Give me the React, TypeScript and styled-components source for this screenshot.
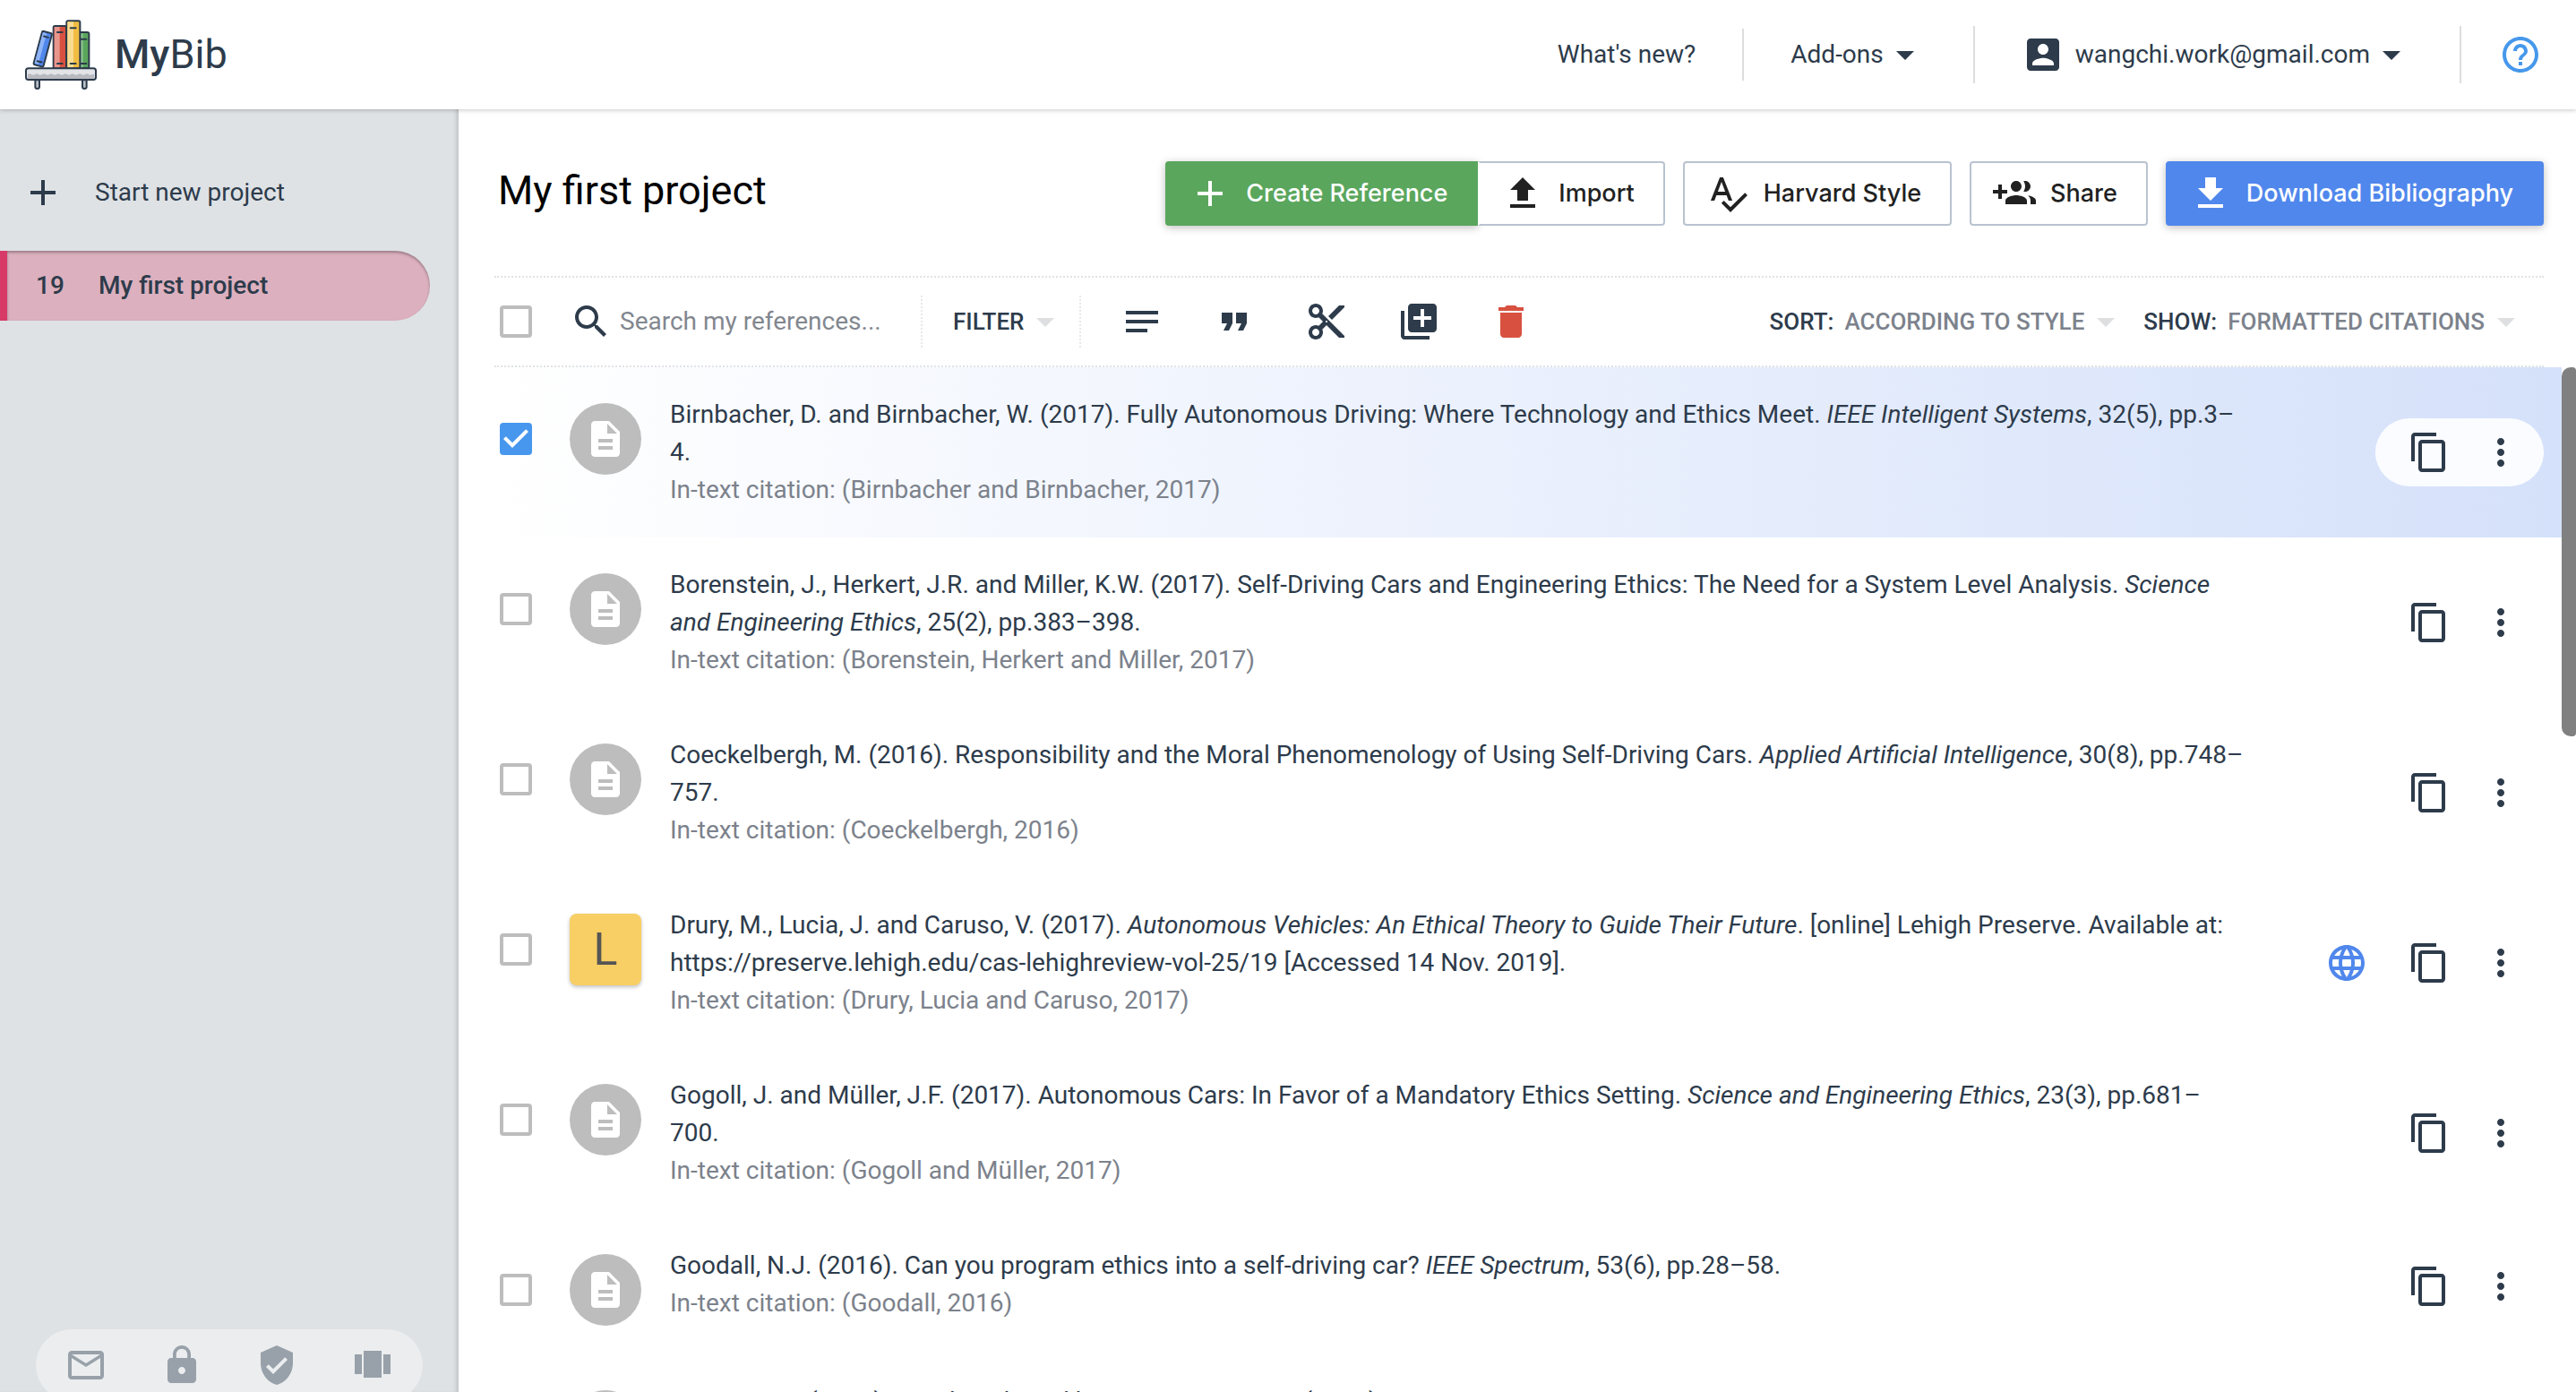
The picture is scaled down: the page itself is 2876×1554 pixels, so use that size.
import React from "react";
import styled, { createGlobalStyle } from "styled-components";

const ink = "#2d3b4b";
const muted = "#7c828c";
const green = "#5aa65d";
const blue = "#5087ec";
const danger = "#d85140";

const GlobalStyle = createGlobalStyle`
  *, *::before, *::after { box-sizing: border-box; }
  body {
    margin: 0;
    overflow: hidden;
    background: #fff;
    color: ${ink};
    font-family: Roboto, "Liberation Sans", sans-serif;
    font-size: 28px;
    line-height: 42px;
  }
  button, input, select { font: inherit; color: inherit; margin: 0; }
  button { background: none; border: 0; padding: 0; cursor: pointer; }
  h1 { margin: 0; }
`;

const paths = {
  add: "M19 13h-6v6h-2v-6H5v-2h6V5h2v6h6v2z",
  upload: "M9 16h6v-6h4l-7-7-7 7h4zm-4 2h14v2H5z",
  download: "M19 9h-4V3H9v6H5l7 7 7-7zM5 18v2h14v-2H5z",
  spellcheck:
    "M12.45 16h2.09L9.43 3H7.57L2.46 16h2.09l1.12-3h5.64l1.14 3zm-6.02-5L8.5 5.48 10.57 11H6.43zm15.16.59l-8.09 8.09L9.83 16l-1.41 1.41 5.09 5.09L23 13l-1.41-1.41z",
  groupAdd:
    "M8 10H5V7H3v3H0v2h3v3h2v-3h3v-2zm10 1c1.66 0 2.99-1.34 2.99-3S19.66 5 18 5c-.32 0-.63.05-.91.14.57.81.9 1.79.9 2.86s-.34 2.04-.9 2.86c.28.09.59.14.91.14zm-5 0c1.66 0 2.99-1.34 2.99-3S14.66 5 13 5c-1.66 0-3 1.34-3 3s1.34 3 3 3zm6.62 2.16c.83.73 1.38 1.66 1.38 2.84v2h3v-2c0-1.54-2.37-2.49-4.38-2.84zM13 13c-2 0-6 1-6 3v2h12v-2c0-2-4-3-6-3z",
  search:
    "M15.5 14h-.79l-.28-.27C15.41 12.59 16 11.11 16 9.5 16 5.91 13.09 3 9.5 3S3 5.91 3 9.5 5.91 16 9.5 16c1.61 0 3.09-.59 4.23-1.57l.27.28v.79l5 4.99L20.49 19l-4.99-5zm-6 0C7.01 14 5 11.99 5 9.5S7.01 5 9.5 5 14 7.01 14 9.5 11.99 14 9.5 14z",
  notes: "M3 18h12v-2H3v2zM3 6v2h18V6H3zm0 7h18v-2H3v2z",
  quote: "M6 17h3l2-4V7H5v6h3zm8 0h3l2-4V7h-6v6h3z",
  cut: "M9.64 7.64c.23-.5.36-1.05.36-1.64 0-2.21-1.79-4-4-4S2 3.79 2 6s1.79 4 4 4c.59 0 1.14-.13 1.64-.36L10 12l-2.36 2.36C7.14 14.13 6.59 14 6 14c-2.21 0-4 1.79-4 4s1.79 4 4 4 4-1.79 4-4c0-.59-.13-1.14-.36-1.64L12 14l7 7h3v-1L9.64 7.64zM6 8c-1.1 0-2-.89-2-2s.9-2 2-2 2 .89 2 2-.9 2-2 2zm0 12c-1.1 0-2-.89-2-2s.9-2 2-2 2 .89 2 2-.9 2-2 2zm6-7.5c-.28 0-.5-.22-.5-.5s.22-.5.5-.5.5.22.5.5-.22.5-.5.5zM19 3l-6 6 2 2 7-7V3z",
  libraryAdd:
    "M4 6H2v14c0 1.1.9 2 2 2h14v-2H4V6zm16-4H8c-1.1 0-2 .9-2 2v12c0 1.1.9 2 2 2h12c1.1 0 2-.9 2-2V4c0-1.1-.9-2-2-2zm-1 9h-4v4h-2v-4H9V9h4V5h2v4h4v2z",
  trash: "M6 19c0 1.1.9 2 2 2h8c1.1 0 2-.9 2-2V7H6v12zM19 4h-3.5l-1-1h-5l-1 1H5v2h14V4z",
  copy: "M16 1H4c-1.1 0-2 .9-2 2v14h2V3h12V1zm3 4H8c-1.1 0-2 .9-2 2v14c0 1.1.9 2 2 2h11c1.1 0 2-.9 2-2V7c0-1.1-.9-2-2-2zm0 16H8V7h11v14z",
  more: "M12 8c1.1 0 2-.9 2-2s-.9-2-2-2-2 .9-2 2 .9 2 2 2zm0 2c-1.1 0-2 .9-2 2s.9 2 2 2 2-.9 2-2-.9-2-2-2zm0 6c-1.1 0-2 .9-2 2s.9 2 2 2 2-.9 2-2-.9-2-2-2z",
  globe:
    "M11.99 2C6.47 2 2 6.48 2 12s4.47 10 9.99 10C17.52 22 22 17.52 22 12S17.52 2 11.99 2zm6.93 6h-2.95c-.32-1.25-.78-2.45-1.38-3.56 1.84.63 3.37 1.91 4.33 3.56zM12 4.04c.83 1.2 1.48 2.53 1.91 3.96h-3.82c.43-1.43 1.08-2.76 1.91-3.96zM4.26 14C4.1 13.36 4 12.69 4 12s.1-1.36.26-2h3.38c-.08.66-.14 1.32-.14 2 0 .68.06 1.34.14 2H4.26zm.82 2h2.95c.32 1.25.78 2.45 1.38 3.56-1.84-.63-3.37-1.9-4.33-3.56zm2.95-8H5.08c.96-1.66 2.49-2.93 4.33-3.56C8.81 5.55 8.35 6.75 8.03 8zM12 19.96c-.83-1.2-1.48-2.53-1.91-3.96h3.82c-.43 1.43-1.08 2.76-1.91 3.96zM14.34 14H9.66c-.09-.66-.16-1.32-.16-2 0-.68.07-1.35.16-2h4.68c.09.65.16 1.32.16 2 0 .68-.07 1.34-.16 2zm.25 5.56c.6-1.11 1.06-2.31 1.38-3.56h2.95c-.96 1.65-2.49 2.93-4.33 3.56zM16.36 14c.08-.66.14-1.32.14-2 0-.68-.06-1.34-.14-2h3.38c.16.64.26 1.31.26 2s-.1 1.36-.26 2h-3.38z",
  description:
    "M14 2H6c-1.1 0-1.99.9-1.99 2L4 20c0 1.1.89 2 1.99 2H18c1.1 0 2-.9 2-2V8l-6-6zm2 16H8v-2h8v2zm0-4H8v-2h8v2zm-3-5V3.5L18.5 9H13z",
  account:
    "M3 5v14c0 1.1.89 2 2 2h14c1.1 0 2-.9 2-2V5c0-1.1-.9-2-2-2H5c-1.11 0-2 .9-2 2zm12 4c0 1.66-1.34 3-3 3s-3-1.34-3-3 1.34-3 3-3 3 1.34 3 3zm-9 8c0-2 4-3.1 6-3.1s6 1.1 6 3.1v1H6v-1z",
  help: "M11 18h2v-2h-2v2zm1-16C6.48 2 2 6.48 2 12s4.48 10 10 10 10-4.48 10-10S17.52 2 12 2zm0 18c-4.41 0-8-3.59-8-8s3.59-8 8-8 8 3.59 8 8-3.59 8-8 8zm0-14c-2.21 0-4 1.79-4 4h2c0-1.1.9-2 2-2s2 .9 2 2c0 2-3 1.75-3 5h2c0-2.25 3-2.5 3-5 0-2.21-1.79-4-4-4z",
  mail: "M20 4H4c-1.1 0-1.99.9-1.99 2L2 18c0 1.1.9 2 2 2h16c1.1 0 2-.9 2-2V6c0-1.1-.9-2-2-2zm0 14H4V8l8 5 8-5v10zm-8-7L4 6h16l-8 5z",
  lock: "M18 8h-1V6c0-2.76-2.24-5-5-5S7 3.24 7 6v2H6c-1.1 0-2 .9-2 2v10c0 1.1.9 2 2 2h12c1.1 0 2-.9 2-2V10c0-1.1-.9-2-2-2zm-6 9c-1.1 0-2-.9-2-2s.9-2 2-2 2 .9 2 2-.9 2-2 2zm3.1-9H8.9V6c0-1.71 1.39-3.1 3.1-3.1 1.71 0 3.1 1.39 3.1 3.1v2z",
  shield:
    "M12 1L3 5v6c0 5.55 3.84 10.74 9 12 5.16-1.26 9-6.45 9-12V5l-9-4zm-2 16l-4-4 1.41-1.41L10 14.17l6.59-6.59L18 9l-8 8z",
  carousel: "M7 19h10V4H7v15zm-5-2h4V6H2v11zM18 6v11h4V6h-4z",
  caret: "M7 10l5 5 5-5z",
  check: "M10 17l-5-5 1.41-1.41L10 14.17l7.59-7.59L19 8z",
};

type IconName = keyof typeof paths;

const Svg = styled.svg<{ $color?: string }>`
  display: block;
  flex: none;
  width: 48px;
  height: 48px;
  fill: ${(p) => p.$color ?? "currentColor"};
`;

function Icon({ name, color }: { name: IconName; color?: string }) {
  return (
    <Svg viewBox="0 0 24 24" $color={color} aria-hidden="true">
      <path d={paths[name]} />
    </Svg>
  );
}

/* ---------- shell ---------- */

const Page = styled.div`
  display: flex;
  flex-direction: column;
  height: 100vh;
`;

const Header = styled.header`
  display: flex;
  align-items: center;
  flex: none;
  height: 122px;
  padding: 0 38px 0 28px;
  background: #fff;
  box-shadow: 0 1px 5px rgba(0, 0, 0, 0.22);
  z-index: 2;
`;

const Brand = styled.a`
  display: flex;
  align-items: center;
  gap: 20px;
  color: ${ink};
  text-decoration: none;
  font-size: 45px;
  line-height: 66px;
`;

const BrandStrong = styled.span`
  font-weight: 500;
`;

const LogoSvg = styled.svg`
  display: block;
  width: 80px;
  height: 78px;
`;

const Nav = styled.nav`
  display: flex;
  align-items: center;
  margin-left: auto;
`;

const NavLink = styled.a`
  color: inherit;
  text-decoration: none;
`;

const MenuButton = styled.button<{ $strong?: boolean }>`
  display: flex;
  align-items: center;
  white-space: nowrap;
  font-size: ${(p) => (p.$strong ? "26px" : "28px")};
  font-weight: ${(p) => (p.$strong ? 500 : 400)};
`;

const AccountName = styled.span`
  margin-left: 12px;
`;

const NavDivider = styled.span<{ $height: number }>`
  width: 2px;
  height: ${(p) => p.$height}px;
  margin: 0 52px;
  background: #dcdddf;
`;

const HelpLink = styled.a`
  margin-left: -10px;
  color: #4698eb;
`;

const Body = styled.div`
  display: flex;
  flex: 1;
  min-height: 0;
`;

/* ---------- sidebar ---------- */

const Sidebar = styled.aside`
  display: flex;
  flex-direction: column;
  flex: none;
  width: 512px;
  padding-top: 50px;
  background: #dee2e5;
  box-shadow: inset -5px 0 5px -3px rgba(0, 0, 0, 0.16);
`;

const NewProject = styled.button`
  display: flex;
  align-items: center;
  gap: 34px;
  height: 86px;
  margin-bottom: 22px;
  padding: 0 24px;
`;

const ProjectItem = styled.button`
  display: flex;
  align-items: center;
  width: 480px;
  height: 78px;
  padding-left: 32px;
  border-left: 8px solid #d73a67;
  border-radius: 0 40px 40px 0;
  background: #dcb0be;
  box-shadow: inset 0 2px 3px rgba(0, 0, 0, 0.3);
  font-weight: 500;
`;

const ProjectCount = styled.span`
  width: 70px;
  text-align: left;
`;

const SideLinks = styled.div`
  display: flex;
  justify-content: space-between;
  margin: auto 40px -10px;
  padding: 16px 32px;
  border-radius: 40px;
  background: #ebedef;
  color: #98a1a9;
`;

const SideLink = styled.a`
  color: inherit;
`;

/* ---------- main ---------- */

const Main = styled.main`
  display: flex;
  flex-direction: column;
  flex: 1;
  min-width: 0;
`;

const TitleBar = styled.div`
  display: flex;
  align-items: flex-start;
  flex: none;
  padding: 58px 36px 56px 44px;
`;

const Title = styled.h1`
  color: #000;
  font-size: 45px;
  font-weight: 400;
  line-height: 66px;
`;

const Actions = styled.div`
  display: flex;
  gap: 20px;
  margin-left: auto;
`;

const ButtonGroup = styled.div`
  display: flex;
`;

type ActionTone = "green" | "blue" | "plain";

const fills: Record<ActionTone, string> = { green, blue, plain: "#fff" };
const borders: Record<ActionTone, string> = { green, blue, plain: "#b9c3d0" };

const ActionButton = styled.button<{ $tone: ActionTone; $join?: "left" | "right" }>`
  display: flex;
  align-items: center;
  gap: 16px;
  height: 72px;
  padding: 0 32px 0 24px;
  border: 2px solid ${(p) => borders[p.$tone]};
  ${(p) => p.$join === "right" && "border-left-color: #fff;"}
  border-radius: ${(p) =>
    p.$join === "left" ? "4px 0 0 4px" : p.$join === "right" ? "0 4px 4px 0" : "4px"};
  background: ${(p) => fills[p.$tone]};
  color: ${(p) => (p.$tone === "plain" ? "#212121" : "#fff")};
  box-shadow: ${(p) => (p.$tone === "plain" ? "none" : "0 2px 10px rgba(0, 0, 0, 0.26)")};
  font-family: Inter, Roboto, sans-serif;
  font-size: 27px;
  font-weight: 500;
  white-space: nowrap;
`;

const Toolbar = styled.div`
  display: flex;
  align-items: center;
  flex: none;
  height: 102px;
  margin: 0 36px 0 40px;
  padding: 0 18px 0 6px;
  border-top: 2px dotted #e0e3e6;
  border-bottom: 2px dotted #e0e3e6;
`;

const CheckLabel = styled.label`
  display: grid;
  flex: none;
  width: 36px;
  height: 36px;
`;

const CheckInput = styled.input`
  grid-area: 1 / 1;
  appearance: none;
  width: 36px;
  height: 36px;
  border: 4px solid #bdbdbd;
  border-radius: 4px;

  &:checked {
    border-color: #4797ee;
    background: #4797ee;
  }
`;

const CheckMark = styled.span`
  grid-area: 1 / 1;
  place-self: center;
  margin: -6px;
  color: #fff;
  pointer-events: none;
`;

function Checkbox({ label, checked }: { label: string; checked?: boolean }) {
  return (
    <CheckLabel>
      <CheckInput type="checkbox" aria-label={label} defaultChecked={checked} />
      {checked && (
        <CheckMark>
          <Icon name="check" />
        </CheckMark>
      )}
    </CheckLabel>
  );
}

const Search = styled.label`
  display: flex;
  align-items: center;
  gap: 8px;
  width: 392px;
  margin-left: 42px;
`;

const SearchInput = styled.input`
  flex: 1;
  min-width: 0;
  padding: 0;
  border: 0;
  outline: 0;
  background: none;

  &::placeholder {
    color: #82878f;
    opacity: 1;
  }
`;

const ToolDivider = styled.span`
  height: 58px;
  border-left: 2px dotted #e6e8ea;
`;

const FilterBox = styled.div`
  padding: 0 14px 0 34px;
`;

const Tools = styled.div`
  display: flex;
  gap: 55px;
  margin-left: 44px;
`;

const IconButton = styled.button<{ $color?: string }>`
  color: ${(p) => p.$color ?? ink};
`;

const Options = styled.div`
  display: flex;
  gap: 18px;
  margin-left: auto;
`;

const Option = styled.label`
  display: flex;
  align-items: center;
  font-size: 26px;
  font-weight: 500;
  white-space: nowrap;
`;

const OptionSelect = styled.select`
  appearance: none;
  field-sizing: content;
  margin-left: 12px;
  padding: 0;
  border: 0;
  background: none;
  color: ${muted};
`;

/* ---------- references ---------- */

const ListArea = styled.div`
  display: flex;
  flex: 1;
  min-height: 0;
  padding-left: 40px;
`;

const List = styled.div`
  flex: 1;
  min-width: 0;
  overflow: hidden;
`;

const Scrollbar = styled.div`
  flex: none;
  width: 16px;
`;

const Thumb = styled.div`
  height: 36%;
  border-radius: 10px 4px 4px 10px;
  background: #808080;
`;

const Row = styled.article<{ $selected?: boolean }>`
  display: flex;
  padding: 32px 20px 32px 6px;
  background: ${(p) => (p.$selected ? "linear-gradient(90deg, #fff, #d5e1fa)" : "none")};
`;

const Lead = styled.div`
  display: flex;
  align-items: center;
  align-self: flex-start;
  gap: 42px;
  margin: 8px 32px 0 0;
`;

const Badge = styled.div<{ $letter?: boolean }>`
  display: grid;
  place-items: center;
  width: 80px;
  height: 80px;
  border-radius: ${(p) => (p.$letter ? "8px" : "50%")};
  background: ${(p) => (p.$letter ? "#f8cf64" : "#bdbdbd")};
  box-shadow: ${(p) => (p.$letter ? "0 2px 4px rgba(0, 0, 0, 0.25)" : "none")};
  color: ${(p) => (p.$letter ? "#555" : "#fff")};
  font-size: 50px;
  line-height: 66px;
`;

const Texts = styled.div`
  flex: 1;
  min-width: 0;
`;

const InText = styled.div`
  color: ${muted};
`;

const RowActions = styled.div`
  display: flex;
  align-items: center;
  justify-content: flex-end;
  align-self: center;
  flex: none;
  gap: 8px;
  width: 334px;
`;

const ActionPill = styled.div<{ $selected?: boolean }>`
  display: flex;
  gap: 32px;
  margin: -14px 0;
  padding: 14px 24px 14px 36px;
  border-radius: 38px;
  background: ${(p) => (p.$selected ? "#fbfcff" : "none")};
`;

interface Reference {
  before: string;
  source: string;
  after: string;
  inText: string;
  selected?: boolean;
  letter?: string;
  online?: boolean;
}

const references: Reference[] = [
  {
    before:
      "Birnbacher, D. and Birnbacher, W. (2017). Fully Autonomous Driving: Where Technology and Ethics Meet. ",
    source: "IEEE Intelligent Systems",
    after: ", 32(5), pp.3–4.",
    inText: "(Birnbacher and Birnbacher, 2017)",
    selected: true,
  },
  {
    before:
      "Borenstein, J., Herkert, J.R. and Miller, K.W. (2017). Self-Driving Cars and Engineering Ethics: The Need for a System Level Analysis. ",
    source: "Science and Engineering Ethics",
    after: ", 25(2), pp.383–398.",
    inText: "(Borenstein, Herkert and Miller, 2017)",
  },
  {
    before:
      "Coeckelbergh, M. (2016). Responsibility and the Moral Phenomenology of Using Self-Driving Cars. ",
    source: "Applied Artificial Intelligence",
    after: ", 30(8), pp.748–757.",
    inText: "(Coeckelbergh, 2016)",
  },
  {
    before: "Drury, M., Lucia, J. and Caruso, V. (2017). ",
    source: "Autonomous Vehicles: An Ethical Theory to Guide Their Future",
    after:
      ". [online] Lehigh Preserve. Available at: https://preserve.lehigh.edu/cas-lehighreview-vol-25/19 [Accessed 14 Nov. 2019].",
    inText: "(Drury, Lucia and Caruso, 2017)",
    letter: "L",
    online: true,
  },
  {
    before:
      "Gogoll, J. and Müller, J.F. (2017). Autonomous Cars: In Favor of a Mandatory Ethics Setting. ",
    source: "Science and Engineering Ethics",
    after: ", 23(3), pp.681–700.",
    inText: "(Gogoll and Müller, 2017)",
  },
  {
    before: "Goodall, N.J. (2016). Can you program ethics into a self-driving car? ",
    source: "IEEE Spectrum",
    after: ", 53(6), pp.28–58.",
    inText: "(Goodall, 2016)",
  },
  {
    before: "Greene, J.D. (2016). Our driverless dilemma. ",
    source: "Science",
    after: ", 352(6293), pp.1514–1515.",
    inText: "(Greene, 2016)",
  },
];

function ReferenceRow({ item }: { item: Reference }) {
  return (
    <Row $selected={item.selected}>
      <Lead>
        <Checkbox label={`Select ${item.inText}`} checked={item.selected} />
        <Badge $letter={!!item.letter}>{item.letter ?? <Icon name="description" />}</Badge>
      </Lead>
      <Texts>
        <div>
          {item.before}
          <em>{item.source}</em>
          {item.after}
        </div>
        <InText>In-text citation: {item.inText}</InText>
      </Texts>
      <RowActions>
        {item.online && (
          <IconButton $color={blue} aria-label="Open website">
            <Icon name="globe" />
          </IconButton>
        )}
        <ActionPill $selected={item.selected}>
          <IconButton aria-label="Copy">
            <Icon name="copy" />
          </IconButton>
          <IconButton aria-label="More">
            <Icon name="more" />
          </IconButton>
        </ActionPill>
      </RowActions>
    </Row>
  );
}

function Logo() {
  return (
    <LogoSvg viewBox="84 66 240 234" aria-hidden="true">
      <g stroke={ink} strokeWidth="6" strokeLinejoin="round" strokeLinecap="round">
        <path d="M118 268v23q0 6 7 6t7-6v-23zM276 268v23q0 6 7 6t7-6v-23z" fill="#b9c0c8" />
        <g transform="rotate(15 143 165)">
          <rect x="126" y="106" width="34" height="116" rx="5" fill="#5087ec" />
          <path d="M129 110h13v108h-13z" fill="#8fb4f6" stroke="none" />
          <path d="M136 122h15M136 208h15" />
        </g>
        <rect x="262" y="108" width="36" height="121" rx="6" fill="#5aa65d" />
        <path d="M270 112h8v114h-8z" fill="#8cc48e" stroke="none" />
        <path d="M272 131h17M272 213h17" />
        <rect x="179" y="87" width="43" height="142" rx="5" fill="#d85140" />
        <path d="M182 90h18v136h-18z" fill="#e8958c" stroke="none" />
        <path d="M192 108h17M192 213h17" />
        <rect x="223" y="70" width="45" height="159" rx="5" fill="#f1bd42" />
        <path d="M226 73h20v153h-20z" fill="#f9dc92" stroke="none" />
        <path d="M236 94h18M236 213h18" />
        <rect x="87" y="229" width="234" height="38" rx="8" fill="#e3e4e8" />
      </g>
      <path d="M93 249q6-5 12 0t12 0 12 0 12 0 12 0 12 0 12 0 12 0 12 0 12 0 12 0 12 0 12 0 12 0 12 0 12 0 12 0 12 0h6v10q0 5-5 5H98q-5 0-5-5z" fill="#b9bac0" />
    </LogoSvg>
  );
}

export default function App() {
  return (
    <Page>
      <GlobalStyle />
      <Header>
        <Brand href="#home">
          <Logo />
          <span>
            <BrandStrong>My</BrandStrong>Bib
          </span>
        </Brand>
        <Nav>
          <NavLink href="#news">What's new?</NavLink>
          <NavDivider $height={58} />
          <MenuButton>
            Add-ons
            <Icon name="caret" />
          </MenuButton>
          <NavDivider $height={64} />
          <MenuButton>
            <Icon name="account" />
            <AccountName>wangchi.work@gmail.com</AccountName>
            <Icon name="caret" />
          </MenuButton>
          <NavDivider $height={64} />
          <HelpLink href="#help" aria-label="Help">
            <Icon name="help" />
          </HelpLink>
        </Nav>
      </Header>
      <Body>
        <Sidebar>
          <NewProject>
            <Icon name="add" />
            Start new project
          </NewProject>
          <ProjectItem>
            <ProjectCount>19</ProjectCount>
            My first project
          </ProjectItem>
          <SideLinks>
            <SideLink href="#contact" aria-label="Contact">
              <Icon name="mail" />
            </SideLink>
            <SideLink href="#privacy" aria-label="Privacy">
              <Icon name="lock" />
            </SideLink>
            <SideLink href="#terms" aria-label="Terms">
              <Icon name="shield" />
            </SideLink>
            <SideLink href="#ads" aria-label="Ads">
              <Icon name="carousel" />
            </SideLink>
          </SideLinks>
        </Sidebar>
        <Main>
          <TitleBar>
            <Title>My first project</Title>
            <Actions>
              <ButtonGroup>
                <ActionButton $tone="green" $join="left">
                  <Icon name="add" />
                  Create Reference
                </ActionButton>
                <ActionButton $tone="plain" $join="right">
                  <Icon name="upload" />
                  Import
                </ActionButton>
              </ButtonGroup>
              <ActionButton $tone="plain">
                <Icon name="spellcheck" />
                Harvard Style
              </ActionButton>
              <ActionButton $tone="plain">
                <Icon name="groupAdd" />
                Share
              </ActionButton>
              <ActionButton $tone="blue">
                <Icon name="download" />
                Download Bibliography
              </ActionButton>
            </Actions>
          </TitleBar>
          <Toolbar>
            <Checkbox label="Select all references" />
            <Search>
              <Icon name="search" />
              <SearchInput
                type="text"
                aria-label="Search my references"
                placeholder="Search my references..."
              />
            </Search>
            <ToolDivider />
            <FilterBox>
              <MenuButton $strong>
                FILTER
                <Icon name="caret" color="#dedfe0" />
              </MenuButton>
            </FilterBox>
            <ToolDivider />
            <Tools>
              <IconButton aria-label="Copy bibliography">
                <Icon name="notes" />
              </IconButton>
              <IconButton aria-label="Copy in-text citation">
                <Icon name="quote" />
              </IconButton>
              <IconButton aria-label="Cut">
                <Icon name="cut" />
              </IconButton>
              <IconButton aria-label="Duplicate">
                <Icon name="libraryAdd" />
              </IconButton>
              <IconButton $color={danger} aria-label="Delete">
                <Icon name="trash" />
              </IconButton>
            </Tools>
            <Options>
              <Option>
                SORT:
                <OptionSelect>
                  <option>ACCORDING TO STYLE</option>
                </OptionSelect>
                <Icon name="caret" color="#dedfe0" />
              </Option>
              <Option>
                SHOW:
                <OptionSelect>
                  <option>FORMATTED CITATIONS</option>
                </OptionSelect>
                <Icon name="caret" color="#dedfe0" />
              </Option>
            </Options>
          </Toolbar>
          <ListArea>
            <List>
              {references.map((item) => (
                <ReferenceRow key={item.inText} item={item} />
              ))}
            </List>
            <Scrollbar>
              <Thumb />
            </Scrollbar>
          </ListArea>
        </Main>
      </Body>
    </Page>
  );
}
